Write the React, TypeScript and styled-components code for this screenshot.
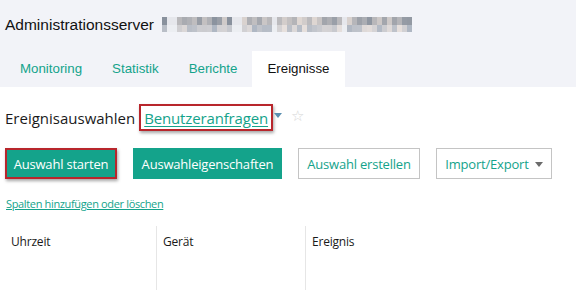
import React from "react";
import styled, { createGlobalStyle } from "styled-components";

const Global = createGlobalStyle`
  html, body { margin: 0; padding: 0; background: #ffffff; }
  body { width: 576px; height: 290px; overflow: hidden; }
  * { box-sizing: border-box; }
`;

const GREEN = "#14a38b";
const RED = "#b8262c";

const Page = styled.div`
  width: 576px;
  height: 290px;
  display: flex;
  flex-direction: column;
  font-family: "Open Sans", "Noto Sans", sans-serif;
  color: #1a1a1a;
`;

const Header = styled.header`
  background: #f2f3f8;
  height: 87px;
  display: flex;
  flex-direction: column;
`;

const TitleRow = styled.div`
  height: 51px;
  display: flex;
  align-items: center;
  padding: 0 0 2px 5px;
  gap: 8px;
`;

const Title = styled.h1`
  margin: 0;
  font-family: "Liberation Sans", Arial, sans-serif;
  font-weight: normal;
  font-size: 15.5px;
  color: #111;
`;

const Blur = styled.div`
  display: grid;
  grid-template-columns: repeat(50, 5px);
  grid-template-rows: 8px 7px;
  filter: blur(0.5px);
`;

const BlurCell = styled.span<{ $c: string }>`
  display: block;
  background: ${(p) => p.$c};
`;

const Tabs = styled.nav`
  display: flex;
  height: 36px;
  padding-left: 5px;
`;

const Tab = styled.div<{ $active?: boolean }>`
  padding: 0 15px;
  display: flex;
  align-items: center;
  font-family: "Liberation Sans", Arial, sans-serif;
  font-size: 13.3px;
  color: ${(p) => (p.$active ? "#111" : GREEN)};
  background: ${(p) => (p.$active ? "#ffffff" : "transparent")};
  padding-bottom: 1px;
`;

const Content = styled.main`
  flex: 1;
  display: flex;
  flex-direction: column;
  padding: 17px 0 0 5px;
`;

const SelRow = styled.div`
  display: flex;
  align-items: center;
  height: 27px;
`;

const SelLabel = styled.span`
  font-size: 15px;
  color: #1a1a1a;
  margin-right: 4px;
`;

const Highlight = styled.span`
  border: 2px solid ${RED};
  box-shadow: 1px 2px 3px rgba(0, 0, 0, 0.35);
  height: 27px;
  display: flex;
  align-items: center;
  padding: 0 3px 0 3px;
`;

const SelLink = styled.a`
  font-size: 15px;
  letter-spacing: -0.15px;
  color: ${GREEN};
  text-decoration: underline;
  text-underline-offset: 2px;
`;

const Caret = styled.span`
  width: 0;
  height: 0;
  border-left: 4px solid transparent;
  border-right: 4px solid transparent;
  border-top: 5px solid #5a8fb0;
  margin: 0 0 4px 1px;
`;

const Star = styled.span`
  font-size: 15px;
  color: #d6d6d6;
  margin-left: 9px;
  margin-bottom: 3px;
  font-family: "DejaVu Sans", sans-serif;
`;

const ButtonRow = styled.div`
  display: flex;
  gap: 16px;
  margin-top: 17px;
  height: 31px;
`;

const Button = styled.button<{ $variant: "primary" | "outline"; $mark?: boolean; $w: number }>`
  width: ${(p) => p.$w}px;
  height: 31px;
  font-family: "Open Sans", "Noto Sans", sans-serif;
  font-size: 13px;
  letter-spacing: -0.2px;
  padding: 0;
  cursor: pointer;
  display: flex;
  align-items: center;
  justify-content: center;
  gap: 6px;
  background: ${(p) => (p.$variant === "primary" ? GREEN : "#ffffff")};
  color: ${(p) => (p.$variant === "primary" ? "#ffffff" : GREEN)};
  border: ${(p) =>
    p.$mark ? `2px solid ${RED}` : p.$variant === "primary" ? `1px solid ${GREEN}` : "1px solid #c4c4c4"};
  box-shadow: ${(p) => (p.$mark ? "1px 2px 3px rgba(0,0,0,0.35)" : "none")};
`;

const SmallCaret = styled.span`
  width: 0;
  height: 0;
  border-left: 4px solid transparent;
  border-right: 4px solid transparent;
  border-top: 5px solid #6b6b6b;
  margin-top: 1px;
`;

const ColumnsLink = styled.a`
  margin-top: 17px;
  margin-left: 1px;
  font-size: 11px;
  letter-spacing: -0.35px;
  color: ${GREEN};
  text-decoration: underline;
  align-self: flex-start;
`;

const Table = styled.div`
  margin: 15px 0 0 -5px;
  flex: 1;
  display: grid;
  grid-template-columns: 156px 149px 1fr;
`;

const Col = styled.div<{ $first?: boolean }>`
  border-left: ${(p) => (p.$first ? "none" : "1px solid #e6e6e6")};
  padding: 7px 0 0 ${(p) => (p.$first ? 11 : 6)}px;
  font-size: 12px;
  letter-spacing: -0.2px;
  color: #1a1a1a;
`;

// pixelated (obscured) server name: deterministic grey blocks
const gaps = new Set([1, 2, 14, 15, 22, 36]);
function blockColor(row: number, col: number): string {
  if (gaps.has(col)) return row === 0 ? "#e6e7ec" : "#eceef2";
  const n = Math.abs(Math.sin(col * 12.9898 + row * 78.233) * 43758.5453) % 1;
  const base = row === 0 ? 145 + Math.round(n * 70) : 182 + Math.round(n * 45);
  const tint = Math.round((n - 0.5) * 16);
  return `rgb(${base + tint}, ${base}, ${base - tint + 4})`;
}

const blocks: string[] = [];
for (let r = 0; r < 2; r++) for (let c = 0; c < 50; c++) blocks.push(blockColor(r, c));

export default function App() {
  return (
    <Page>
      <Global />
      <Header>
        <TitleRow>
          <Title>Administrationsserver</Title>
          <Blur>
            {blocks.map((c, i) => (
              <BlurCell key={i} $c={c} />
            ))}
          </Blur>
        </TitleRow>
        <Tabs>
          <Tab>Monitoring</Tab>
          <Tab>Statistik</Tab>
          <Tab>Berichte</Tab>
          <Tab $active>Ereignisse</Tab>
        </Tabs>
      </Header>
      <Content>
        <SelRow>
          <SelLabel>Ereignisauswahlen</SelLabel>
          <Highlight>
            <SelLink>Benutzeranfragen</SelLink>
          </Highlight>
          <Caret />
          <Star>☆</Star>
        </SelRow>
        <ButtonRow>
          <Button $variant="primary" $mark $w={112}>Auswahl starten</Button>
          <Button $variant="primary" $w={149}>Auswahleigenschaften</Button>
          <Button $variant="outline" $w={122}>Auswahl erstellen</Button>
          <Button $variant="outline" $w={116}>
            Import/Export <SmallCaret />
          </Button>
        </ButtonRow>
        <ColumnsLink>Spalten hinzufügen oder löschen</ColumnsLink>
        <Table>
          <Col $first>Uhrzeit</Col>
          <Col>Gerät</Col>
          <Col>Ereignis</Col>
        </Table>
      </Content>
    </Page>
  );
}
